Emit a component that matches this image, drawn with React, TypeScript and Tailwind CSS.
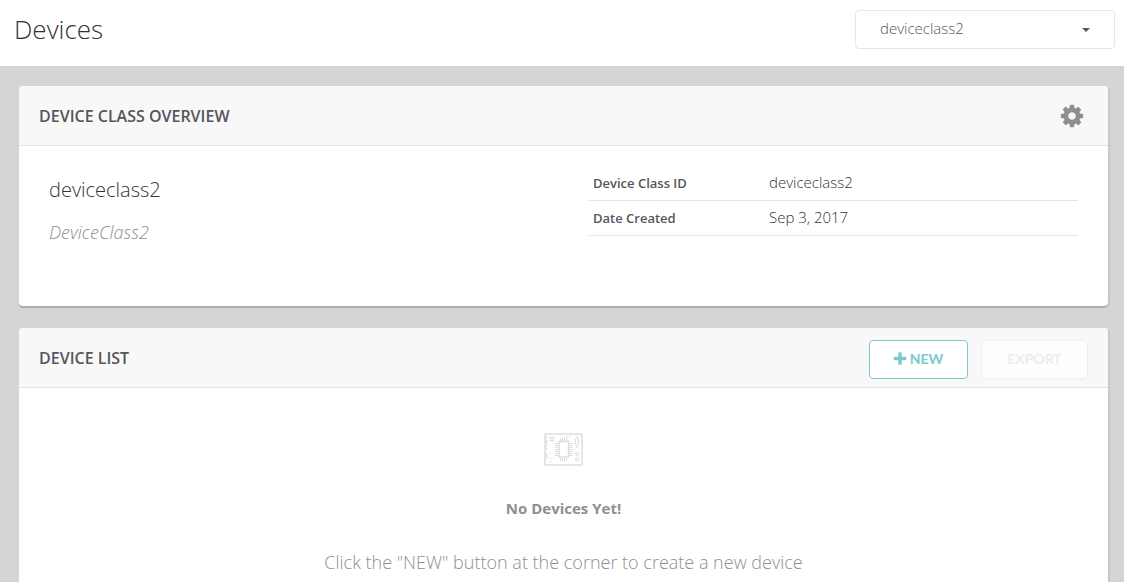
import React, { useState } from "react";

function CogIcon() {
  return (
    <svg viewBox="0 0 1792 1792" fill="currentColor" className="size-[26px]" aria-hidden="true">
      <path d="M1152 896q0-106-75-181t-181-75-181 75-75 181 75 181 181 75 181-75 75-181zm512-109v222q0 12-8 23t-20 13l-185 28q-19 54-39 91 35 50 107 138 10 12 10 25t-9 23q-27 37-99 108t-94 71q-12 0-26-9l-138-108q-44 23-91 38-16 136-29 186-7 28-36 28h-222q-14 0-24.5-8.5t-11.5-21.5l-28-184q-49-16-90-37l-141 107q-10 9-25 9-14 0-25-11-126-114-165-168-7-10-7-23 0-12 8-23 15-21 51-66.5t54-70.5q-27-50-41-99l-183-27q-13-2-21-12.5t-8-23.5v-222q0-12 8-23t19-13l186-28q14-46 39-92-40-57-107-138-10-12-10-24 0-10 9-23 26-36 98.5-107.5t94.5-71.5q13 0 26 10l138 107q44-23 91-38 16-136 29-186 7-28 36-28h222q14 0 24.5 8.5t11.5 21.5l28 184q49 16 90 37l142-107q9-9 24-9 13 0 25 10 129 119 165 170 7 8 7 22 0 12-8 23-15 21-51 66.5t-54 70.5q26 50 41 98l183 28q13 2 21 12.5t8 23.5z" />
    </svg>
  );
}

function PlusIcon() {
  return (
    <svg viewBox="0 0 1792 1792" fill="currentColor" className="size-4" aria-hidden="true">
      <path d="M1600 736v192q0 40-28 68t-68 28h-416v416q0 40-28 68t-68 28h-192q-40 0-68-28t-28-68v-416h-416q-40 0-68-28t-28-68v-192q0-40 28-68t68-28h416v-416q0-40 28-68t68-28h192q40 0 68 28t28 68v416h416q40 0 68 28t28 68z" />
    </svg>
  );
}

function BoardIcon() {
  return (
    <svg viewBox="0 0 39 33" fill="none" stroke="#dcdcdc" className="h-[33px] w-[39px]" aria-hidden="true">
      <rect x="1" y="1" width="37" height="31" rx="1.5" stroke="#e6e6e6" strokeWidth="2" />
      <rect x="6.5" y="4.5" width="3" height="3" />
      <rect x="15" y="8.5" width="9.5" height="15.5" strokeWidth="1.4" />
      <path d="M16.5 5v3M18.5 5v3M20.5 5v3M22.5 5v3M16.5 25v3M18.5 25v3M20.5 25v3M22.5 25v3" />
      <path d="M11 10.5h3.5M11 12.5h3.5M11 14.5h3.5M11 16.5h3.5M11 18.5h3.5M11 20.5h3.5M11 22.5h3.5M25 10.5h3.5M25 12.5h3.5M25 14.5h3.5M25 16.5h3.5M25 18.5h3.5M25 20.5h3.5M25 22.5h3.5" />
      <path d="M1.5 4.5h2M1.5 7.5h2M1.5 9.5h2M1.5 12.5h2M1.5 15.5h2M1.5 20.5h2M1.5 22.5h2M1.5 24.5h2" strokeWidth="1.4" />
      <path d="M33 3v3M33 12v3" />
      <rect x="31.5" y="5.5" width="3" height="6.5" rx="1" />
      <circle cx="33" cy="21" r="1.5" />
      <circle cx="33" cy="26.5" r="1.5" />
      <path d="M5.5 21h2M8.5 24.5h2M5.5 25.5h2M5.5 28.5h2M22 3.5h2M25 3.5h2" strokeWidth="0.8" />
    </svg>
  );
}

function Card({
  title,
  actions,
  children,
}: {
  title: string;
  actions?: React.ReactNode;
  children: React.ReactNode;
}) {
  return (
    <section className="rounded bg-white shadow-[0_2px_0_#acacac,2px_1px_0_#c8c8c8]">
      <header className="flex h-[60px] items-center justify-between rounded-t border-b border-[#e4e4e4] bg-[#f8f8f8] px-5">
        <h2 className="text-base font-semibold text-[#54565b]">{title}</h2>
        {actions}
      </header>
      {children}
    </section>
  );
}

const details = [
  { label: "Device Class ID", value: "deviceclass2" },
  { label: "Date Created", value: "Sep 3, 2017" },
];

export default function App() {
  const [deviceClass, setDeviceClass] = useState("deviceclass2");

  return (
    <div className="flex h-screen flex-col overflow-hidden bg-[#d5d5d5] font-['Open_Sans',sans-serif] text-[#333]">
      <div className="flex h-[66px] shrink-0 items-start justify-between bg-white pt-2.5 pr-[9px] pl-[14px]">
        <h1 className="text-[26px] leading-[38px] font-light">Devices</h1>
        <div className="relative w-[260px]">
          <select
            aria-label="Device class"
            value={deviceClass}
            onChange={(e) => setDeviceClass(e.target.value)}
            className="h-[39px] w-full appearance-none rounded border border-[#e7e7e7] bg-white px-6 pb-0.5 text-[15px] font-light text-[#54565b]"
          >
            <option value="deviceclass2">deviceclass2</option>
          </select>
          <svg
            viewBox="0 0 8 4"
            fill="#54565b"
            className="pointer-events-none absolute top-[18px] right-[25px] h-1 w-2"
            aria-hidden="true"
          >
            <path d="M0 0h8L4 4z" />
          </svg>
        </div>
      </div>

      <main className="flex flex-col gap-[22px] pt-5 pr-4 pl-[19px]">
        <Card
          title="DEVICE CLASS OVERVIEW"
          actions={
            <button type="button" aria-label="Settings" className="mr-[3px] text-[#8f8f8f]">
              <CogIcon />
            </button>
          }
        >
          <div className="grid h-40 grid-cols-[540px_1fr] px-[30px] pt-5">
            <div className="pt-2.5">
              <h3 className="text-xl leading-7 font-light">deviceclass2</h3>
              <p className="mt-4 text-lg leading-6 font-light text-[#8f8f8f] italic">DeviceClass2</p>
            </div>
            <table className="h-[70px] w-full border-separate border-spacing-0 text-left">
              <tbody>
                {details.map((d) => (
                  <tr key={d.label} className="h-[35px]">
                    <th
                      scope="row"
                      className="w-[175px] border-b border-[#e4e4e4] pl-1 text-[13px] leading-5 font-semibold text-[#54565b]"
                    >
                      {d.label}
                    </th>
                    <td className="border-b border-[#e4e4e4] pb-0.5 pl-[5px] text-[15px] leading-5 font-light">
                      {d.value}
                    </td>
                  </tr>
                ))}
              </tbody>
            </table>
          </div>
        </Card>

        <Card
          title="DEVICE LIST"
          actions={
            <div className="flex gap-[13px] pt-1 font-['Lato',sans-serif] text-sm font-bold">
              <button
                type="button"
                className="flex h-[39px] w-[99px] items-center justify-center gap-0.5 rounded border border-[#7cc8d0] bg-white pr-0.5 pb-0.5 text-[#7cc8d0]"
              >
                <PlusIcon />
                NEW
              </button>
              <button
                type="button"
                disabled
                className="h-[39px] w-[107px] rounded border border-[#efefef] bg-[#fdfdfd] pb-0.5 text-[#ececec]"
              >
                EXPORT
              </button>
            </div>
          }
        >
          <div className="flex flex-col items-center pt-[45px] pb-10 text-center text-[#8f8f8f]">
            <BoardIcon />
            <p className="mt-8 text-[15px] leading-5 font-bold">No Devices Yet!</p>
            <p className="mt-8 text-lg leading-6 font-light">
              Click the "NEW" button at the corner to create a new device
            </p>
          </div>
        </Card>
      </main>
    </div>
  );
}
